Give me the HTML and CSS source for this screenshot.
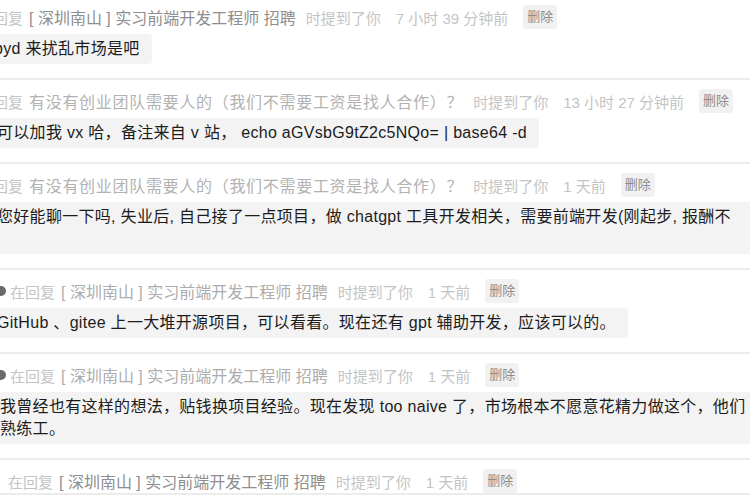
FILE: index.html
```html
<!DOCTYPE html>
<html lang="zh-CN">
<head>
<meta charset="utf-8">
<link rel="stylesheet" href="styles.css">
</head>
<body>
<div class="feed">
  <div class="item first">
    <div class="head shift-far">
      <span class="dot"></span>
      <span class="meta">在回复</span>
      <span class="link">[ 深圳南山 ] 实习前端开发工程师 招聘</span>
      <span class="meta gap">时提到了你</span>
      <span class="meta gap-l">7 小时 39 分钟前</span>
      <span class="del">删除</span>
    </div>
    <div class="bubble shift-b1">byd 来扰乱市场是吧</div>
  </div>
  <div class="item">
    <div class="head shift-far">
      <span class="dot"></span>
      <span class="meta">在回复</span>
      <span class="link light">有没有创业团队需要人的（我们不需要工资是找人合作）？</span>
      <span class="meta gap">时提到了你</span>
      <span class="meta gap-l">13 小时 27 分钟前</span>
      <span class="del">删除</span>
    </div>
    <div class="bubble">可以加我 vx 哈，备注来自 v 站， echo aGVsbG9tZ2c5NQo= | base64 -d</div>
  </div>
  <div class="item">
    <div class="head shift-far">
      <span class="dot"></span>
      <span class="meta">在回复</span>
      <span class="link light">有没有创业团队需要人的（我们不需要工资是找人合作）？</span>
      <span class="meta gap">时提到了你</span>
      <span class="meta gap-l">1 天前</span>
      <span class="del">删除</span>
    </div>
    <div class="bubble wide tall">您好能聊一下吗, 失业后, 自己接了一点项目，做 chatgpt 工具开发相关，需要前端开发(刚起步, 报酬不</div>
  </div>
  <div class="item">
    <div class="head shift-near">
      <span class="dot"></span>
      <span class="meta">在回复</span>
      <span class="link faint">[ 深圳南山 ] 实习前端开发工程师 招聘</span>
      <span class="meta gap">时提到了你</span>
      <span class="meta gap-l">1 天前</span>
      <span class="del">删除</span>
    </div>
    <div class="bubble">GitHub 、gitee 上一大堆开源项目，可以看看。现在还有 gpt 辅助开发，应该可以的。</div>
  </div>
  <div class="item">
    <div class="head shift-near">
      <span class="dot"></span>
      <span class="meta">在回复</span>
      <span class="link faint">[ 深圳南山 ] 实习前端开发工程师 招聘</span>
      <span class="meta gap">时提到了你</span>
      <span class="meta gap-l">1 天前</span>
      <span class="del">删除</span>
    </div>
    <div class="bubble wide shift-b5">我曾经也有这样的想法，贴钱换项目经验。现在发现 too naive 了，市场根本不愿意花精力做这个，他们<br>熟练工。</div>
  </div>
  <div class="item">
    <div class="head shift-last">
      <span class="meta">在回复</span>
      <span class="link">[ 深圳南山 ] 实习前端开发工程师 招聘</span>
      <span class="meta gap">时提到了你</span>
      <span class="meta gap-l">1 天前</span>
      <span class="del">删除</span>
    </div>
  </div>
</div>
</body>
</html>
```
FILE: styles.css
```css
html, body {
  margin: 0;
  padding: 0;
  background: #ffffff;
}
body {
  width: 750px;
  height: 500px;
  overflow: hidden;
  font-family: "Liberation Sans", "Noto Sans CJK SC", sans-serif;
}
.feed {
  width: 750px;
}
.item {
  padding-top: 9px;
  border-bottom: 2px solid #ececec;
}
.item.first {
  padding-top: 5px;
}
.head {
  display: flex;
  align-items: center;
  height: 24px;
  white-space: nowrap;
  font-size: 15px;
}
.shift-far { margin-left: -36px; }
.shift-near { margin-left: -4px; }
.shift-last { margin-left: 8px; }
.dot {
  width: 10px;
  height: 10px;
  border-radius: 50%;
  background: #6a6a6a;
  margin-right: 4px;
  flex: none;
}
.meta {
  color: #c4c4c4;
}
.link {
  color: #8e8e8e;
  font-size: 16px;
  margin-left: 6px;
}
.link.light {
  color: #b2b2b2;
  letter-spacing: 0.7px;
}
.link.faint { color: #adadad; }
.gap { margin-left: 10px; }
.gap-l { margin-left: 15px; }
.del {
  margin-left: 15px;
  background: #f1f1f1;
  color: #8c8c8c;
  font-size: 13px;
  line-height: 24px;
  padding: 0 4px;
  border-radius: 3px;
}
.bubble {
  display: inline-block;
  margin: 5px 0 14px -13px;
  padding: 4px 12px 4px 10px;
  line-height: 22px;
  font-size: 16px;
  letter-spacing: 0.3px;
  color: #1c1c1c;
  background: #f3f3f3;
  border-radius: 4px;
  white-space: nowrap;
}
.bubble.wide {
  display: block;
  width: 760px;
}
.bubble.tall {
  height: 44px;
}
.shift-b1 { margin-left: -16px; }
.shift-b5 { margin-left: -10px; }
```
